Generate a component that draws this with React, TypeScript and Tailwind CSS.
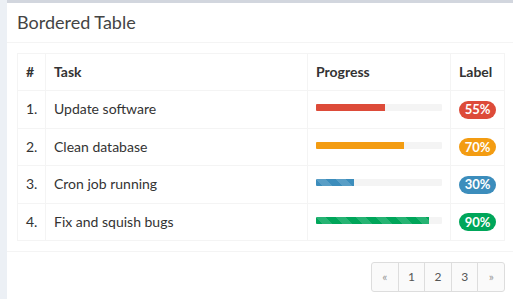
import React from "react";

type Row = { n: string; task: string; pct: number; color: string; striped: boolean };

const ROWS: Row[] = [
  { n: "1.", task: "Update software", pct: 55, color: "bg-[#dd4b39]", striped: false },
  { n: "2.", task: "Clean database", pct: 70, color: "bg-[#f39c12]", striped: false },
  { n: "3.", task: "Cron job running", pct: 30, color: "bg-[#3c8dbc]", striped: true },
  { n: "4.", task: "Fix and squish bugs", pct: 90, color: "bg-[#00a65a]", striped: true },
];

const stripes =
  "bg-[linear-gradient(45deg,rgba(255,255,255,.15)_25%,transparent_25%,transparent_50%,rgba(255,255,255,.15)_50%,rgba(255,255,255,.15)_75%,transparent_75%,transparent)] bg-[length:20px_20px]";

const pages = ["«", "1", "2", "3", "»"];

export default function App() {
  return (
    <div className="flex h-[299px] w-[513px] overflow-hidden bg-[#ecf0f5] pl-[7px] font-['Lato',sans-serif] text-[14px] text-[#333]">
      <div className="w-[508px] shrink-0 border-t-[3px] border-[#d2d6de] bg-white">
        {/* header */}
        <div className="border-b border-[#f4f4f4] p-[10px]">
          <h3 className="text-[18px] leading-[19px] text-[#444]">Bordered Table</h3>
        </div>

        {/* body */}
        <div className="p-[10px]">
          <table className="w-[488px] table-fixed border-collapse">
            <colgroup>
              <col className="w-[28px]" />
              <col />
              <col className="w-[143px]" />
              <col className="w-[54px]" />
            </colgroup>
            <thead>
              <tr className="h-[37px]">
                <th className="border border-[#f4f4f4] px-2 text-left font-bold leading-5">#</th>
                <th className="border border-[#f4f4f4] px-2 text-left font-bold leading-5">Task</th>
                <th className="border border-[#f4f4f4] px-2 text-left font-bold leading-5">Progress</th>
                <th className="border border-[#f4f4f4] px-2 text-left font-bold leading-5">Label</th>
              </tr>
            </thead>
            <tbody>
              {ROWS.map((r) => (
                <tr key={r.n} className="h-[37.5px]">
                  <td className="border border-[#f4f4f4] px-2 leading-5">{r.n}</td>
                  <td className="border border-[#f4f4f4] px-2 leading-5">{r.task}</td>
                  <td className="border border-[#f4f4f4] px-2 align-top">
                    <div className="mt-[13px] h-[7px] w-full overflow-hidden rounded-[1px] bg-[#f4f4f4]">
                      <div
                        className={`h-full ${r.color} ${r.striped ? stripes : ""}`}
                        style={{ width: `${r.pct}%` }}
                      />
                    </div>
                  </td>
                  <td className="border border-[#f4f4f4] px-2 leading-5">
                    <span
                      className={`inline-flex h-[18px] w-[37px] items-center justify-center rounded-[10px] text-[13px] font-bold leading-none text-white ${r.color}`}
                    >
                      {r.pct}%
                    </span>
                  </td>
                </tr>
              ))}
            </tbody>
          </table>
        </div>

        {/* footer */}
        <div className="flex justify-end border-t border-[#f4f4f4] px-[10px] pt-[10px]">
          <ul className="flex">
            {pages.map((p, i) => (
              <li
                key={i}
                className={`flex h-[30px] w-[27.6px] items-center justify-center border border-[#ddd] bg-[#fafafa] text-[12px] ${
                  i === 0 ? "rounded-l-[3px]" : "-ml-px"
                } ${i === pages.length - 1 ? "rounded-r-[3px]" : ""} ${
                  p === "«" || p === "»" ? "text-[#999]" : "text-[#555]"
                }`}
              >
                {p}
              </li>
            ))}
          </ul>
        </div>
      </div>
    </div>
  );
}
